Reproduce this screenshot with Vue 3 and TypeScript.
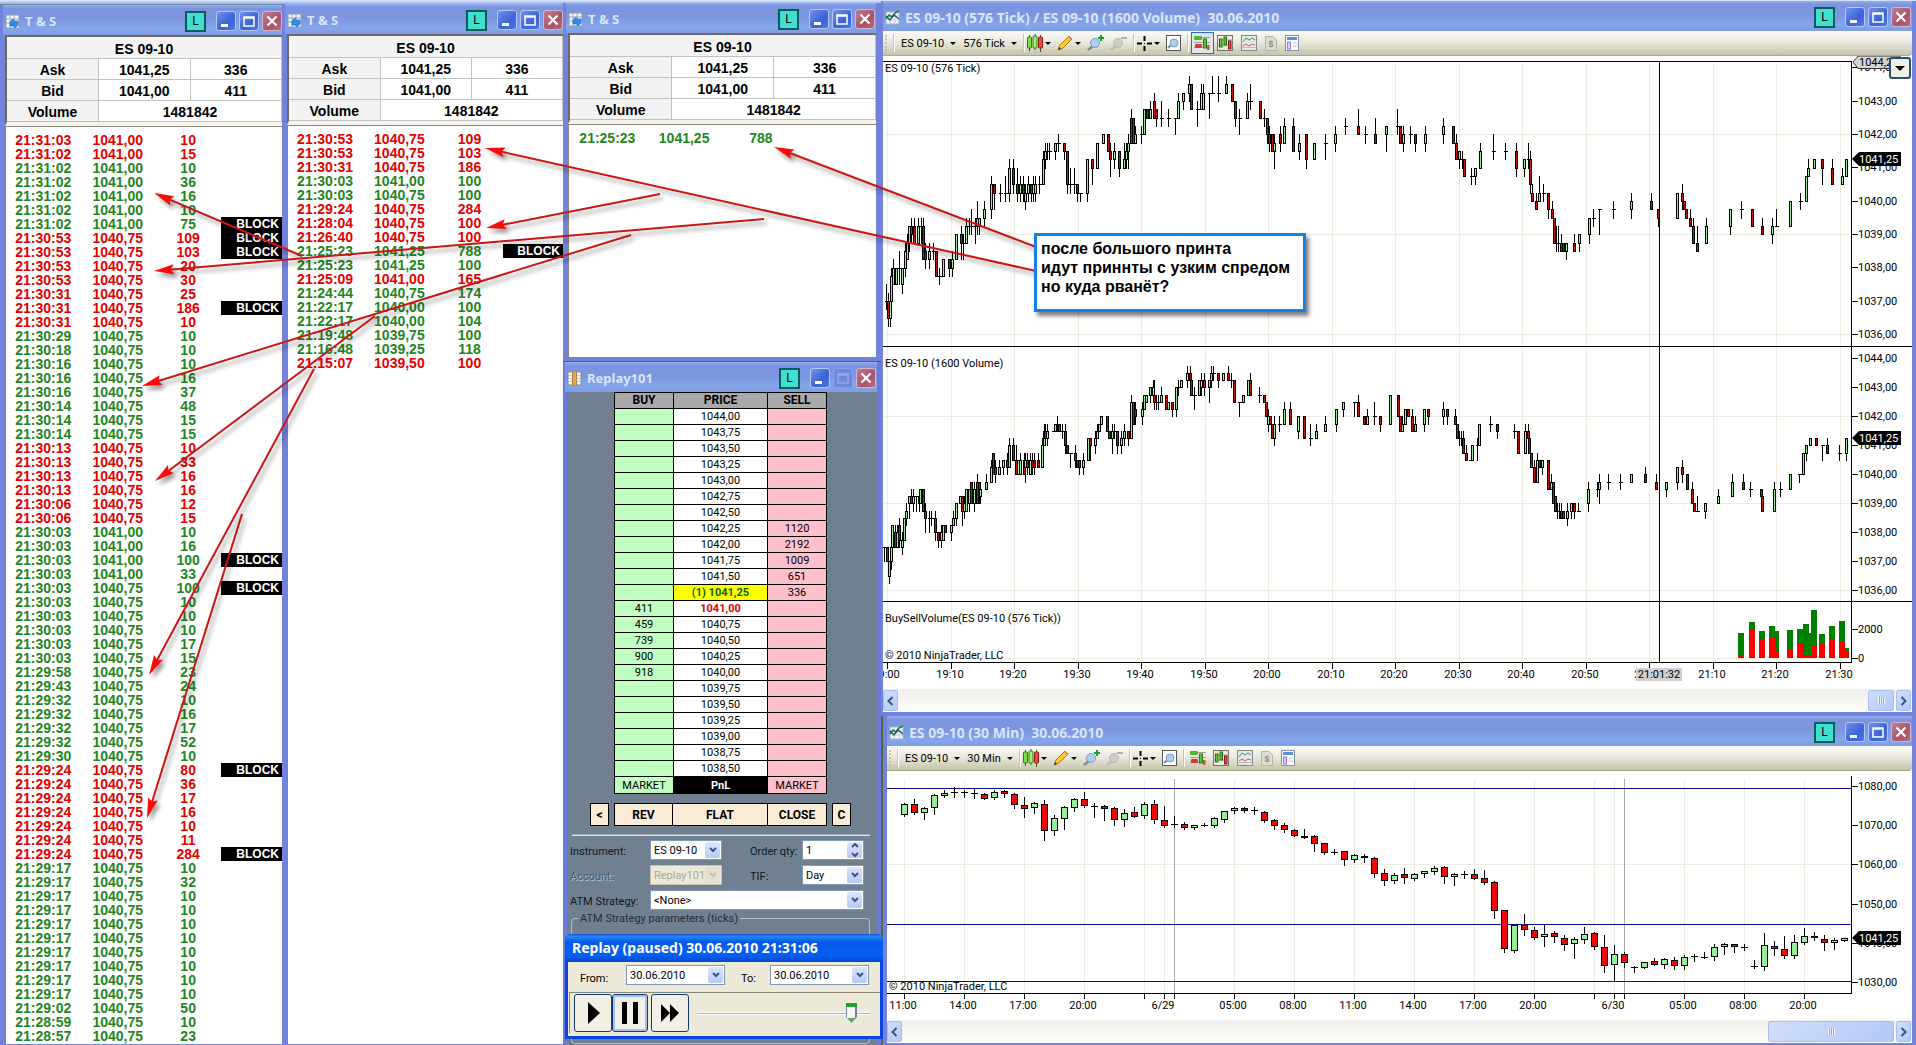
<script setup lang="ts">
import { h, ref } from 'vue'

/* ---------- shared title bar ---------- */

const appIcons: Record<string, string> = {
  tape: '<rect x="1" y="1" width="13" height="13" fill="#f4f6fa" stroke="#8c9ab4"/><path d="M1 5H14M1 9H14M5 1V14M9 1V14" stroke="#9aa6bc"/><path d="M5 8l3-3 1 2h4v4l-3 3-1-2H5z" fill="#2f8fe6" stroke="#1b5fb0" stroke-width=".6"/>',
  dom: '<rect x="1" y="1" width="13" height="13" fill="#f8f4ee" stroke="#8a8a8a"/><rect x="5" y="1" width="5" height="13" fill="#f2a32c"/><path d="M1 4.500H14M1 7.500H14M1 10.500H14" stroke="#c8b8a0" stroke-width=".8"/><path d="M5.500 1V14M9.500 1V14" stroke="#8a7a60" stroke-width=".8"/>',
  chart: '<rect x="1" y="2" width="13" height="12" fill="#f2f5fb" stroke="#a8b4cc"/><path d="M1 6H14M1 10H14M5 2V14M10 2V14" stroke="#c6cede"/><path d="M1 9l3-4 3 2 3-4 4-2" fill="none" stroke="#138a2e" stroke-width="1.600"/><path d="M1 6l4 4 4-5 5 4" fill="none" stroke="#27506e" stroke-width="1.300"/>',
}

const TitleBar = (p: { title: string; icon: string; locked?: boolean }) =>
  h('header', { class: 'bar' }, [
    h('svg', { class: 'bar-icon', width: 15, height: 15, viewBox: '0 0 15 15', innerHTML: appIcons[p.icon] }),
    h('span', { class: 'bar-title' }, p.title),
    h('button', { class: 'bar-link', type: 'button' }, 'L'),
    h('button', { class: 'bar-btn', type: 'button', 'aria-label': 'Minimize' }, [
      h('svg', { width: 18, height: 18, viewBox: '0 0 18 18', innerHTML: '<rect x="4" y="12" width="7" height="3" fill="#fff"/>' }),
    ]),
    h('button', { class: ['bar-btn', p.locked && 'bar-off'], type: 'button', 'aria-label': 'Maximize' }, [
      h('svg', { width: 18, height: 18, viewBox: '0 0 18 18', innerHTML: '<path d="M4 5H14V14H4zM4 6H14" fill="none" stroke="currentColor" stroke-width="1.500"/>' }),
    ]),
    h('button', { class: 'bar-btn bar-close', type: 'button', 'aria-label': 'Close' }, [
      h('svg', { width: 18, height: 18, viewBox: '0 0 18 18', innerHTML: '<path d="M4.500 4.500L13.500 13.500M13.500 4.500L4.500 13.500" stroke="#fff" stroke-width="2.200"/>' }),
    ]),
  ])
TitleBar.props = ['title', 'icon', 'locked']

/* ---------- time & sales ---------- */

interface Print { time: string; price: string; size: string; side: string; block: boolean }

// One line per time and price: "time price size…", each size tagged r sell, g buy, b block trade
const tape = (src: string): Print[] =>
  src.trim().split(/\s*\n\s*/).flatMap((line) => {
    const [time, price, ...sizes] = line.split(' ')
    return sizes.map((s) => ({
      time,
      price,
      size: s.replace(/\D/g, ''),
      side: s.includes('r') ? 'sell' : 'buy',
      block: s.includes('b'),
    }))
  })

const tapes = [
  {
    cls: 'ts-one',
    prints: tape(`21:31:03 1041,00 10r
      21:31:02 1041,00 15r 10g 36g 16g 10g 75gb
      21:30:53 1040,75 109rb 103rb 20r 30r
      21:30:31 1040,75 25r 186rb 10r
      21:30:29 1040,75 10g
      21:30:18 1040,75 10g
      21:30:16 1040,75 10g 16g 37g
      21:30:14 1040,75 48g 15g 15g
      21:30:13 1040,75 10r 33r 16r 16r
      21:30:06 1040,75 12r 15r
      21:30:03 1041,00 10g 16g 100gb 33g
      21:30:03 1040,75 100gb 10g 10g 10g 17g 15g
      21:29:58 1040,75 23g
      21:29:43 1040,75 24g
      21:29:32 1040,75 10g 16g 17g 52g
      21:29:30 1040,75 10g
      21:29:24 1040,75 80rb 36r 17r 16r 10r 11r 284rb
      21:29:17 1040,75 10g 32g 10g 10g 10g 10g 10g 10g 10g 10g
      21:29:02 1040,75 50g
      21:28:59 1040,75 10g
      21:28:57 1040,75 23g`),
  },
  {
    cls: 'ts-two',
    prints: tape(`21:30:53 1040,75 109r 103r
      21:30:31 1040,75 186r
      21:30:03 1041,00 100g
      21:30:03 1040,75 100g
      21:29:24 1040,75 284r
      21:28:04 1040,75 100r
      21:26:40 1040,75 100r
      21:25:23 1041,25 788gb 100g
      21:25:09 1041,00 165r
      21:24:44 1040,75 174g
      21:22:17 1040,00 100g 104g
      21:19:48 1039,75 100g
      21:16:48 1039,25 118g
      21:15:07 1039,50 100r`),
  },
  { cls: 'ts-three', prints: tape('21:25:23 1041,25 788g') },
]

/* ---------- price ladder ---------- */

const bids: Record<string, string> = { '1041,00': '411', '1040,75': '459', '1040,50': '739', '1040,25': '900', '1040,00': '918' }
const asks: Record<string, string> = { '1042,25': '1120', '1042,00': '2192', '1041,75': '1009', '1041,50': '651', '1041,25': '336' }
const ladder = Array.from({ length: 23 }, (_, i) => {
  const price = (1044 - i * 0.25).toFixed(2).replace('.', ',')
  return { price, bid: bids[price] ?? '', ask: asks[price] ?? '' }
})

const qty = ref(1)
const speed = ref(92)

/* ---------- charts ---------- */

interface Candle { x: number; fill: string; top: number; bottom: number; high: number; low: number }

const fills: Record<string, string> = { g: '#98ee98', r: '#c41010', k: '' }

// "x colour top bottom [high] [low]"; levels are quarter-point ticks above 1036,00
const candles = (src: string, x0: number, xStep: number, base: number, tick: number): Candle[] =>
  src.trim().split(/\s*,\s*/).map((s) => {
    const [x, c, a, b, hi, lo] = s.split(' ')
    const y = (t: string) => Math.round(base - Number(t) * tick)
    return {
      x: Math.floor(x0 + Number(x) * xStep),
      fill: fills[c],
      top: y(a),
      bottom: y(b),
      high: y(hi ?? a),
      low: y(lo ?? b),
    }
  })

const tickEarly = `19 k 4 4 6 3,25 r 4 2 5 1,31 g 4 2 6 1,35 g 7 4 8 4,40 g 8 6 9 6,49 g 8 6 8 6,58 k 8 8 10 6,67 g 8 6 8 5,76 g 10 8 11 7,
82 g 11 9 12 9,89 g 13 11 13 10,95 r 13 12 14 11,102 r 13 11 14 11,115 g 13 11 14 11,125 g 13 13 14 11,130 r 13 9 14 9,137 r 10 9 11 8,148 g 10 9 11 8,
159 k 10 10 11 9,169 r 10 7,179 k 7 7 8 6,190 g 9 7,209 r 9 8 9 7,217 g 9 8 10 7,230 g 12 9,245 r 12 11 13 9,251 k 11 11 12 9,260 g 13 11 14 11,
268 k 13 13 14 12,275 k 13 13 15 12,287 k 13 13 14 11,293 g 14 13 16 12,298 g 14 13 14 12,313 g 15 14 16 13,334 g 18 15 19 14,344 r 18 17 18 15,
361 k 17 17 18 16,376 k 17 17 19 16,388 g 20 17 21 16,400 r 20 18 21 17,412 r 18 17 20 16,421 g 18 17 19 16,431 r 18 17 19 16,436 g 17 16 18 15,
446 g 18 17 19 16,453 r 18 17 18 16,460 g 18 17 19 16,467 g 18 17 19 16,478 k 18 18 19 17,490 g 21 18 22 18,496 g 22 21 23 20,503 k 22 22 23 21,
508 k 22 22 23 21,526 g 23 22 23 21,535 k 23 23 24 22,553 r 23 22 23 21,562 r 22 18 22 17,572 k 18 18 20 17,584 k 18 18 20 17,593 r 18 17 18 16,
601 k 17 17 17 16,622 g 21 17 21 16,637 r 21 20 21 18,652 g 23 20,670 g 24 23,685 r 24 22,691 r 22 21 23 19,704 g 22 21 23 20,718 r 22 20 22 19,
733 g 21 20 23 20,740 g 22 21 23 20,746 g 23 22 24 20,755 r 26 23 27 23,761 r 26 23,767 g 24 23 25 23,784 k 24 24 25 23,794 g 27 24,802 r 27 26,
811 g 27 26 28 26,822 r 28 26 29 26,829 r 27 26 27 25,844 k 26 26 28 25,865 k 26 26 27 25,885 k 26 26 26 24,895 g 28 26 29 26,910 g 29 28 29 27,
928 g 30 29 31 28,934 r 30 27,952 k 27 27 28 25,965 g 29 27 30 27,970 g 29 27 30 27,988 k 29 29 29 26,997 k 29 29 31 29,1015 k 29 29 31 28,
1039 g 30 29 31 29,1057 r 30 28,1066 r 28 26 28 25,1078 k 26 26 27 24,1102 g 28 26 29 26,1111 k 28 28 30 27,1141 r 28 26,1153 k 26 26 27 25,
1162 r 26 24 26 23,1169 r 24 23 25 22,1178 r 24 22,1184 g 23 22 24 20,1201 r 24 23 25 22,1213 g 25 23 26 23,1240 r 25 22 26 22,1258 g 23 22 24 21,
1279 r 24 21 24 20,1303 g 23 21,1336 k 23 23 24 21,1366 g 24 23 25 22,1396 k 25 25 26 24,1435 r 25 24 27 24,1456 k 24 24 25 23,1486 r 24 23 26 23,
1519 g 25 24 25 22`
const tickLate = `1397 k 25 25 27 24,1400 r 25 23,1403 g 24 23 25 22,1410 k 24 24 25 23,1415 r 24 23 24 22,1425 g 24 23 25 22,1443 g 25 24 26 23,
1453 r 25 23,1456 r 23 21 24 21,1459 g 22 21 22 20,1462 k 21 21 22 20,1464 r 21 19,1471 k 19 19 20 18,1475 g 20 19 20 18,1480 g 22 20 23 20,
1493 k 22 22 24 21,1505 k 22 22 23 21,1516 r 22 20 23 19,1524 g 21 20 21 19,1528 k 21 21 23 20,1530 r 21 18 22 17,1532 r 17 16 18 16,
1536 r 16 15 17 15,1539 g 17 16 19 16,1543 k 17 17 18 16,1548 r 17 15 17 14,1552 r 15 14 16 14,1554 r 14 11,1556 k 11 11 13 10,1558 k 11 11 13 10,
1561 r 11 10 12 10,1563 r 11 10,1566 g 11 10 11 9,1574 r 11 10 12 10,1579 g 12 11 12 10,1589 g 14 12 14 11,1593 k 14 14 15 13,1599 k 15 15 15 12,
1613 k 15 15 16 14,1631 g 16 15 17 14,1651 r 16 15 17 15,1658 r 15 14 15 13,1677 g 17 14,1682 r 17 16 18 15,1684 r 16 15,1686 r 15 14,
1690 r 14 13 15 13,1693 r 13 11 14 11,1697 r 11 10 13 10,1706 g 13 11 14 11,1730 g 15 13 15 12,1741 k 15 15 16 14,1752 r 15 13,1762 r 13 12 14 12,
1772 g 13 12 14 11,1776 k 13 13 15 13,1790 g 16 13,1800 k 16 16 17 15,1806 g 19 16,1808 g 20 19 21 19,1814 g 21 20,1822 r 21 20 21 18,
1832 r 20 18 21 18,1842 g 19 18 20 18,1846 g 21 19`
const volEarly = `14 k 6 6 6 4,22 r 6 4,27 g 4 2 4 1,33 g 6 4 7 3,38 g 9 6,45 r 8 6 9 6,52 g 8 6 9 6,57 r 9 7 10 6,66 g 7 6 8 5,73 g 10 7,80 g 11 10 12 9,
87 g 13 12 13 10,94 r 13 12 14 12,100 g 13 12 14 11,108 k 13 13 13 11,117 g 13 12 14 11,122 g 14 12,130 r 14 11,135 r 11 10 12 8,148 k 10 10 11 8,
154 k 10 10 11 9,167 r 10 8 11 7,175 r 8 7 8 6,180 r 8 7,185 g 8 7 9 6,191 g 9 7,196 r 9 8,213 g 9 8 9 7,220 g 10 9 11 9,229 g 12 10 12 9,240 g 13 12,
248 r 13 11 13 9,254 g 12 11 13 10,260 g 14 11,267 g 14 12 14 11,274 r 15 12,283 g 14 12 15 11,291 r 15 12 16 12,297 r 15 13 15 12,302 g 14 13 15 12,
320 g 15 14 16 14,334 g 17 15 18 15,340 r 19 16,346 r 17 16 18 15,358 g 17 16 18 16,370 g 18 17 18 16,382 r 18 17 19 16,388 g 20 17 21 17,
400 r 20 18 21 18,410 r 18 16 20 16,415 g 18 16,422 g 18 16 19 16,432 r 18 16 19 16,437 g 18 17 19 15,443 r 18 17 19 16,450 g 18 16 19 16,
457 r 18 17 19 16,463 r 18 17 19 16,475 r 18 17 19 17,487 g 20 17 21 17,492 g 22 20 23 20,497 r 22 21 23 21,503 g 22 21 23 20,520 k 22 22,
525 g 23 22,532 k 23 23 24 22,538 r 23 22,547 k 22 22 23 21,556 r 22 20 23 19,562 r 20 19,571 k 19 19 19 17,586 r 19 18 20 17,591 r 18 17,
597 r 18 17 18 16,611 g 18 17 19 16,625 g 21 18,631 r 21 20 21 18,646 g 21 20 22 19,652 g 22 21 23 21,658 g 23 22,664 g 24 23,682 r 24 22,
687 r 22 21,697 g 22 21 23 19,703 k 22 22 23 21,712 r 22 20 22 19,724 g 21 20 22 19,733 g 22 21 23 20,745 r 22 21 22 20,754 g 26 21 27 21,
760 r 26 23,766 r 25 24 26 23,787 g 25 24 26 23,793 g 27 25,800 g 27 26,811 g 28 27 28 26,820 g 28 27 29 26,824 r 27 26 29 25,829 k 26 26 27 25,
836 k 26 26 27 25,845 g 27 26 28 26,859 r 27 25,865 g 26 25,877 r 26 25 26 24,889 g 28 25 28 24,895 k 28 28 29 27,905 g 29 28,921 g 30 29 31 28,
931 r 30 29 31 27,934 r 29 27,943 k 27 27 28 25,958 g 29 27,964 g 29 28 30 27,974 r 29 28 30 27,988 g 29 28 29 26,995 g 30 29 31 28,
1000 k 30 30 31 29,1015 r 30 29 30 28,1030 g 30 29,1045 r 30 29 31 29,1054 k 29 29 30 28,1063 r 29 26,1078 k 26 26 26 24,1090 g 27 26,1105 g 29 27,
1111 r 29 27 30 27,1138 k 27 27 28 26,1153 r 27 26,1160 r 26 24,1165 g 24 23 25 22,1172 r 24 23,1176 r 23 21,1183 g 23 21 24 20,1197 k 23 23 24 22,
1213 g 25 23 26 23,1231 r 25 23 26 23,1255 g 24 22 24 21,1273 r 24 21,1291 k 21 21 23 20,1309 g 22 21 23 21,1336 g 23 22 24 22,1369 g 25 23 25 22,
1390 g 26 25 26 24,1423 k 26 26 26 24,1435 r 26 24 27 24,1453 r 24 23,1462 g 24 23 25 23,1483 k 24 24 26 23,1501 r 24 23 24 22,1531 g 27 23`
const volLate = `1398 r 27 24,1400 r 24 22,1402 g 23 22 24 22,1405 g 25 23,1408 r 25 24,1412 r 24 22 25 22,1415 g 23 22 24 22,1424 g 25 23 25 22,
1428 r 25 24 25 23,1443 g 25 24 26 23,1447 r 25 24 25 23,1455 r 24 23 25 23,1457 r 23 21,1459 k 21 21 22 20,1461 k 21 21 22 20,1463 r 21 19 22 19,
1466 r 19 18 20 18,1470 k 18 18,1472 g 20 18,1477 k 20 20 21 18,1479 g 23 20,1490 k 23 23 24 22,1497 r 23 22 23 21,1514 k 22 22 23 21,1518 r 22 19,
1525 g 22 19 23 19,1528 r 22 21 23 21,1529 r 21 19,1531 r 19 17,1534 r 17 15 18 15,1537 g 18 15 19 15,1539 r 18 17,1542 g 18 17 18 16,1548 r 18 14,
1551 g 15 14 16 14,1553 r 15 12,1555 r 13 11,1557 k 11 11 12 10,1559 k 11 11 12 10,1561 r 11 10 12 10,1563 r 11 10,1567 g 11 10 12 9,
1571 g 12 11 12 10,1574 r 12 11 12 10,1578 k 11 11 12 11,1588 g 14 12 15 11,1597 k 14 14 15 13,1599 g 15 14 16 12,1608 k 15 15 16 14,
1620 k 15 15 16 14,1631 g 16 15,1645 r 16 15 17 15,1656 r 15 14 16 14,1666 g 15 14 15 13,1677 g 17 15 17 14,1682 r 17 16 18 15,1687 r 16 14,
1692 r 14 12 15 12,1694 r 12 11,1697 k 11 11 13 11,1705 g 12 11 12 10,1718 g 13 12 14 12,1732 g 15 13 16 13,1743 r 15 14 16 14,1750 k 14 14 15 13,
1761 r 14 13,1762 r 13 11,1774 g 14 11 15 11,1780 k 14 14 15 13,1790 g 16 14,1799 k 16 16 16 15,1803 g 19 16,1806 g 20 19 20 18,1810 g 21 20,
1816 r 21 20,1822 k 20 20 20 18,1827 r 20 19 21 19,1839 k 19 19 20 18,1846 g 21 19 21 18`

const intraday = [
  ...candles(tickEarly, 880, 1 / 3, 334.3, 8.333),
  ...candles(tickLate, 0, 1, 334.3, 8.333),
  ...candles(volEarly, 880, 1 / 3, 590.3, 7.25),
  ...candles(volLate, 0, 1, 590.3, 7.25),
]

// Volume histogram: x, width, total height, sell height
const volumes = [
  [1738, 6, 25, 3], [1749, 6, 36, 29], [1759, 6, 27, 18], [1769, 6, 32, 20], [1775, 4, 27, 7], [1787, 6, 28, 9], [1797, 6, 29, 14],
  [1803, 6, 34, 2], [1809, 2, 25, 2], [1811, 6, 48, 13], [1819, 6, 24, 14], [1829, 6, 32, 18], [1839, 6, 37, 17], [1845, 4, 10, 6],
]

// Half-hour bars, ten pixels apart: "colour top bottom high low" in thirds of a pixel below the window top
const halfHour = `g 283 314 279 318,r 283 308 267 311,g 295 308 290 326,g 256 295 252 311,g 250 257 240 260,k 247 250 232 260,k 247 250 240 260,k 249 249 238 264,
r 252 266 249 267,g 247 263 240 267,r 244 251 241 260,r 252 284 248 293,r 284 296 262 320,g 280 295 276 308,r 283 362 270 390,g 325 362 315 375,
g 292 326 288 357,g 268 293 265 302,r 268 287 246 291,k 287 290 280 320,r 289 296 285 329,r 295 329 291 345,g 310 329 297 347,r 307 320 291 321,
g 283 317 276 325,r 283 331 270 338,r 331 347 288 350,k 343 346 318 350,r 343 353 337 356,g 346 353 344 356,k 346 346 339 348,g 325 347 322 350,
g 304 329 303 335,g 295 304 291 308,r 295 302 290 305,k 301 304 291 311,r 307 332 303 335,r 331 347 327 356,r 346 361 340 365,r 361 377 356 378,
r 377 383 357 385,r 379 401 375 422,r 400 428 398 431,k 427 427 417 432,r 424 449 422 464,g 436 449 432 455,r 439 445 433 455,r 445 491 442 502,
r 490 512 478 524,g 496 512 490 518,r 492 503 475 518,g 492 506 488 510,g 484 493 482 500,g 475 485 468 493,r 472 502 468 518,g 492 502 488 524,
k 493 493 484 504,r 492 506 478 508,r 504 518 480 521,r 517 602 514 623,r 601 718 600 727,g 646 722 644 725,r 645 661 612 675,r 660 683 652 686,
g 673 680 645 708,r 670 682 664 695,r 685 706 676 719,g 687 703 682 743,g 673 689 651 700,r 670 712 666 718,r 712 767 676 785,g 733 764 706 814,
r 733 758 726 770,k 772 775 768 785,g 757 775 757 775,r 754 764 744 765,g 748 764 744 773,r 751 767 741 776,g 742 767 736 776,k 739 739 733 752,
k 740 743 726 743,g 710 740 703 749,g 703 710 700 731,r 703 710 702 725,k 712 712 703 719,k 767 770 751 773,g 706 770 670 779,r 709 716 694 735,
r 718 737 679 743,g 697 737 676 743,g 679 700 654 702,r 679 685 667 689,r 688 700 676 719,g 691 700 685 716,g 685 694 685 694`
  .split(/\s*,\s*/)
  .map((s, i) => {
    const [c, ...v] = s.split(' ')
    const [top, bottom, high, low] = v.map((n) => 710 + Math.round(Number(n) / 3))
    return { x: 904 + i * 10, fill: c === 'g' ? '#98ee98' : c === 'r' ? '#f00808' : '', top, bottom, high, low }
  })

const priceLabels = [
  ...[1044, 1043, 1042, 1041, 1040, 1039, 1038, 1037, 1036].map((p) => ({ text: p + ',00', y: Math.round(334 - (p - 1036) * 33.33) })),
  ...[1044, 1043, 1042, 1041, 1040, 1039, 1038, 1037, 1036].map((p) => ({ text: p + ',00', y: 590 - (p - 1036) * 29 })),
  { text: '2000', y: 629 },
  { text: '0', y: 658 },
]
const dayLabels = [1080, 1070, 1060, 1050, 1040, 1030].map((p) => ({ text: p + ',00', y: Math.round(982 - (p - 1030) * 3.92) }))

const times = ['19:00', '19:10', '19:20', '19:30', '19:40', '19:50', '20:00', '20:10', '20:20', '20:30', '20:40', '20:50', '21:00', '21:10', '21:20', '21:30']
  .map((text, i) => ({ text, x: Math.round(887 + i * 63.5) }))
const dayTimes = [
  ['11:00', 904], ['14:00', 964], ['17:00', 1024], ['20:00', 1084], ['', 1144], ['6/29', 1164], ['05:00', 1234], ['08:00', 1294], ['11:00', 1354],
  ['14:00', 1414], ['17:00', 1474], ['20:00', 1534], ['', 1594], ['6/30', 1614], ['05:00', 1684], ['08:00', 1744], ['20:00', 1804],
].map(([text, x]) => ({ text: String(text), x: Number(x) }))

const charts = [
  { id: 'intraday', title: 'ES 09-10 (576 Tick) / ES 09-10 (1600 Volume)\u00a0 30.06.2010', interval: '576 Tick', tabs: true },
  { id: 'day', title: 'ES 09-10 (30 Min)\u00a0 30.06.2010', interval: '30 Min', tabs: false },
]

/* ---------- annotation arrows: tip x, tip y, tail x, tail y ---------- */

const arrows = [
  [154, 193, 302, 256], [154, 271, 764, 219], [142, 386, 631, 235], [155, 481, 375, 316], [149, 675, 314, 369],
  [147, 818, 242, 514], [485, 148, 1036, 271], [486, 228, 660, 194], [774, 147, 1036, 247],
].map(([x, y, tx, ty]) => {
  const len = Math.hypot(tx - x, ty - y)
  const ux = (tx - x) / len
  const uy = (ty - y) / len
  const at = (along: number, side: number) => `${(x + ux * along - uy * side).toFixed(1)},${(y + uy * along + ux * side).toFixed(1)}`
  return { line: { x1: x + ux * 12, y1: y + uy * 12, x2: tx, y2: ty }, head: [at(0, 0), at(20, 5), at(17, 0), at(20, -5)].join(' ') }
})
</script>

<template>
  <main class="desktop">
    <section v-for="t in tapes" :key="t.cls" class="win ts" :class="t.cls">
      <TitleBar title="T &amp; S" icon="tape" />
      <div class="sunken">
        <table class="quote">
          <thead>
            <tr><th colspan="3">ES 09-10</th></tr>
          </thead>
          <tbody>
            <tr><th scope="row">Ask</th><td>1041,25</td><td>336</td></tr>
            <tr><th scope="row">Bid</th><td>1041,00</td><td>411</td></tr>
            <tr><th scope="row">Volume</th><td colspan="2">1481842</td></tr>
          </tbody>
        </table>
      </div>
      <div class="tape">
        <table class="prints">
          <tbody>
            <tr v-for="(p, i) in t.prints" :key="i" :class="p.side">
              <td>{{ p.time }}</td>
              <td>{{ p.price }}</td>
              <td>{{ p.size }}</td>
              <td :class="{ block: p.block }">{{ p.block ? 'BLOCK' : '' }}</td>
            </tr>
          </tbody>
        </table>
      </div>
    </section>

    <section class="win dom">
      <TitleBar title="Replay101" icon="dom" :locked="true" />
      <div class="dom-body">
        <table class="ladder">
          <thead>
            <tr><th>BUY</th><th>PRICE</th><th>SELL</th></tr>
          </thead>
          <tbody>
            <tr v-for="r in ladder" :key="r.price">
              <td class="bid">{{ r.bid }}</td>
              <td :class="{ last: r.price === '1041,25', best: r.price === '1041,00' }">{{ r.price === '1041,25' ? '(1) ' : '' }}{{ r.price }}</td>
              <td class="ask">{{ r.ask }}</td>
            </tr>
          </tbody>
          <tfoot>
            <tr><td class="bid">MARKET</td><td class="pnl">PnL</td><td class="ask">MARKET</td></tr>
          </tfoot>
        </table>
        <div class="actions">
          <button type="button" class="small">&lt;</button>
          <div class="trio">
            <button type="button">REV</button>
            <button type="button">FLAT</button>
            <button type="button">CLOSE</button>
          </div>
          <button type="button" class="small">C</button>
        </div>
        <hr class="rule" />
        <form class="order" @submit.prevent>
          <label for="instrument">Instrument:</label>
          <span class="combo"><select id="instrument"><option>ES 09-10</option></select><i class="drop"><svg width="8" height="6" viewBox="0 0 8 6"><path d="M1 1l3 3 3-3" /></svg></i></span>
          <label for="qty" class="second">Order qty:</label>
          <span class="combo spin"><input id="qty" v-model="qty" type="number" /><i class="drop"><svg width="8" height="14" viewBox="0 0 8 14"><path d="M1 4l3-3 3 3M1 10l3 3 3-3" /></svg></i></span>
          <label for="account" class="faded">Account:</label>
          <span class="combo off"><select id="account" disabled><option>Replay101</option></select><i class="drop"><svg width="8" height="6" viewBox="0 0 8 6"><path d="M1 1l3 3 3-3" /></svg></i></span>
          <label for="tif" class="second">TIF:</label>
          <span class="combo"><select id="tif"><option>Day</option></select><i class="drop"><svg width="8" height="6" viewBox="0 0 8 6"><path d="M1 1l3 3 3-3" /></svg></i></span>
          <label for="atm">ATM Strategy:</label>
          <span class="combo full"><select id="atm"><option>&lt;None&gt;</option></select><i class="drop"><svg width="8" height="6" viewBox="0 0 8 6"><path d="M1 1l3 3 3-3" /></svg></i></span>
        </form>
        <fieldset class="params">
          <legend>ATM Strategy parameters (ticks)</legend>
        </fieldset>
      </div>
    </section>

    <section v-for="c in charts" :key="c.id" class="win chart" :class="c.id">
      <TitleBar :title="c.title" icon="chart" />
      <div class="tools">
        <span class="grip"></span><span class="sep"></span>
        <button type="button" class="pick">ES 09-10<i class="caret"></i></button>
        <button type="button" class="pick">{{ c.interval }}<i class="caret"></i></button>
        <span class="sep"></span>
        <button type="button" class="tool" aria-label="Chart style">
          <svg width="16" height="18" viewBox="0 0 16 18"><path d="M2.500 1V17M8 0V16M13.500 1V18" stroke="#3c5c2c" /><rect x="0.500" y="3" width="4" height="11" rx="1" fill="#7fe03c" stroke="#2c7c1c" /><rect x="6" y="2" width="4" height="12" rx="1" fill="#a8ee70" stroke="#2c7c1c" /><rect x="11.500" y="3" width="4" height="11" rx="1" fill="#e05048" stroke="#981818" /></svg>
        </button><i class="caret"></i>
        <button type="button" class="tool gap" aria-label="Draw">
          <svg width="16" height="16" viewBox="0 0 16 16"><path d="M1 15l2-5 9-9 3 3-9 9z" fill="#f8cc30" stroke="#b07810" /><path d="M1 15l1-3 2 2z" fill="#333" /><path d="M11 2l3 3 1-1-3-3z" fill="#d88080" /></svg>
        </button><i class="caret"></i>
        <button type="button" class="tool gap" aria-label="Zoom in">
          <svg width="17" height="16" viewBox="0 0 17 16"><path d="M1 15l5-4" stroke="#7c8894" stroke-width="2.500" /><circle cx="8" cy="8" r="4.500" fill="#a8d0f4" stroke="#7e9cc0" /><path d="M14 0V6M11 3H17" stroke="#14a028" stroke-width="2" /></svg>
        </button>
        <button type="button" class="tool gap" aria-label="Zoom out" disabled>
          <svg width="17" height="16" viewBox="0 0 17 16"><path d="M1 15l5-4" stroke="#bcbcb8" stroke-width="2.500" /><circle cx="8" cy="8" r="4.500" fill="#ccccc8" stroke="#b8b8b4" /><path d="M11 3H17" stroke="#b0b0ac" stroke-width="2" /></svg>
        </button>
        <span class="sep"></span>
        <button type="button" class="tool" aria-label="Crosshair">
          <svg width="15" height="15" viewBox="0 0 15 15"><path d="M7.500 0V5M7.500 10V15M0 7.500H5M10 7.500H15" stroke="#000" stroke-width="2" /><rect x="7" y="7" width="1" height="1" /></svg>
        </button><i class="caret"></i>
        <button type="button" class="tool gap" aria-label="Data box">
          <svg width="15" height="16" viewBox="0 0 15 16"><rect x="0.500" y="0.500" width="14" height="15" fill="#fff" stroke="#555" /><path d="M2 13l3-3" stroke="#7c8894" stroke-width="2" /><circle cx="8" cy="8" r="4" fill="#a8d0f4" stroke="#7e9cc0" /></svg>
        </button>
        <span class="sep"></span>
        <button type="button" class="tool toggle" :class="{ on: c.tabs }" aria-label="Chart trader">
          <svg width="16" height="16" viewBox="0 0 16 16"><path d="M0 7.500H16M0 2.500H16M0 12.500H16" stroke="#98a0a0" /><rect x="0" y="1" width="8" height="4" rx="1" fill="#50b828" /><rect x="1" y="9" width="7" height="4" rx="1" fill="#d83830" /><rect x="9.500" y="4" width="3" height="9" fill="#58c030" stroke="#2c7c1c" /><rect x="13" y="10" width="2.500" height="5" fill="#e05048" /></svg>
        </button>
        <button type="button" class="tool" aria-label="Indicators">
          <svg width="16" height="16" viewBox="0 0 16 16"><rect x="0.500" y="0.500" width="15" height="15" fill="#e8ece4" stroke="#707070" /><path d="M0 5H16M0 10H16" stroke="#a0a0a0" /><rect x="2.500" y="4" width="2.500" height="8" fill="#68c838" stroke="#246c14" /><rect x="7" y="2" width="2.500" height="8" fill="#68c838" stroke="#246c14" /><rect x="11.500" y="6" width="2.500" height="8" fill="#e05048" stroke="#901818" /></svg>
        </button>
        <button type="button" class="tool far" aria-label="Strategies">
          <svg width="16" height="16" viewBox="0 0 16 16"><rect x="0.500" y="0.500" width="15" height="15" fill="#e4e8e8" stroke="#888" /><path d="M1 12.500H15" stroke="#b8bcbc" /><path d="M2 7l3-4 3 2 3-2 3 2" fill="none" stroke="#38a058" /><path d="M2 11l3-2 3 2 3-2 3 1" fill="none" stroke="#d85850" /></svg>
        </button>
        <button type="button" class="tool far" aria-label="Orders" disabled>
          <svg width="12" height="15" viewBox="0 0 12 15"><path d="M0.500 0.500H8l3.500 3.500V14.500H0.500z" fill="#dcdcd4" stroke="#b4b4ac" /><text x="6" y="11" text-anchor="middle" font-size="9" font-weight="700" fill="#8c8c88">$</text></svg>
        </button>
        <button type="button" class="tool far" aria-label="Properties">
          <svg width="14" height="16" viewBox="0 0 14 16"><rect x="0.500" y="0.500" width="13" height="15" fill="#fff" stroke="#8090a8" /><rect x="2" y="2" width="10" height="3" fill="#5890e0" /><rect x="2.500" y="7" width="3" height="7" fill="#d8c8f8" stroke="#9878e0" /><path d="M8 8H12M8 11H12" stroke="#b8c4d4" /></svg>
        </button>
      </div>

      <div class="plot">
        <svg v-if="c.tabs" class="canvas" viewBox="883 56 1029 633">
          <g class="grid">
            <path v-for="t in times" :key="t.x" :d="`M${t.x}.5 64V662`" />
            <path d="M884 134.500H1851M884 234.500H1851M884 334.500H1851M884 416.500H1851M884 503.500H1851M884 590.500H1851M884 658.500H1851" />
          </g>
          <g shape-rendering="crispEdges">
            <template v-for="(k, i) in intraday" :key="i">
              <rect :x="k.x" :y="k.high" width="1" :height="k.low - k.high + 1" />
              <rect :x="k.x - 1" :y="k.top" :width="k.fill ? 3 : 4" :height="k.bottom - k.top + 1" />
              <rect v-if="k.fill && k.bottom > k.top + 1" :x="k.x" :y="k.top + 1" width="1" :height="k.bottom - k.top - 1" :fill="k.fill" />
            </template>
            <template v-for="v in volumes" :key="v[0]">
              <rect :x="v[0]" :y="658 - v[2]" :width="v[1]" :height="v[2]" fill="#008000" />
              <rect :x="v[0]" :y="658 - v[3]" :width="v[1]" :height="v[3]" fill="#ff0000" />
            </template>
          </g>
          <g class="axis">
            <path d="M883 61.500H1851.500V662.500M883 346.500H1912M883 601.500H1912M883 662.500H1852M1659.500 61V662" />
            <path v-for="t in times" :key="t.x" :d="`M${t.x}.5 662V669`" />
            <path v-for="(l, i) in priceLabels" :key="i" :d="`M1852 ${l.y}.5H1858`" />
          </g>
          <g class="labels">
            <text v-for="t in times" :key="t.x" :x="t.x - 1" y="678" text-anchor="middle">{{ t.text }}</text>
            <text v-for="(l, i) in priceLabels" :key="i" x="1858" :y="l.y + 4">{{ l.text }}</text>
            <text x="885" y="72">ES 09-10 (576 Tick)</text>
            <text x="885" y="367">ES 09-10 (1600 Volume)</text>
            <text x="885" y="622">BuySellVolume(ES 09-10 (576 Tick))</text>
            <text x="885" y="659">© 2010 NinjaTrader, LLC</text>
            <rect x="1636" y="668" width="46" height="13" fill="#d0d0d0" />
            <text x="1659" y="678" text-anchor="middle">21:01:32</text>
            <path d="M1853 62l5-6H1900V68.500H1858z" fill="#d4d4d4" stroke="#333" />
            <text x="1859" y="66">1044,25</text>
            <path d="M1852 159l7-7H1901V166H1859z" />
            <text x="1859" y="163" fill="#fff">1041,25</text>
            <path d="M1852 438l7-7H1901V445H1859z" />
            <text x="1859" y="442" fill="#fff">1041,25</text>
          </g>
        </svg>
        <svg v-else class="canvas" viewBox="887 771 1025 249">
          <g class="grid">
            <path v-for="t in dayTimes" :key="t.x" :d="`M${t.x}.5 779V993`" />
            <path d="M888 864.500H1851" />
            <path d="M1174.500 779V993M1624.500 779V993" stroke="#a8a8a8" />
          </g>
          <path d="M887 788.500H1851M887 924.500H1851M887 981.500H1851" stroke="#0a0a8c" />
          <g shape-rendering="crispEdges">
            <template v-for="k in halfHour" :key="k.x">
              <rect :x="k.x" :y="k.high" width="1" :height="k.low - k.high + 1" />
              <rect :x="k.x - 3" :y="k.top" width="7" :height="Math.max(k.bottom - k.top, 1)" />
              <rect v-if="k.fill && k.bottom > k.top + 2" :x="k.x - 2" :y="k.top + 1" width="5" :height="k.bottom - k.top - 2" :fill="k.fill" />
            </template>
          </g>
          <g class="axis">
            <path d="M1851.500 776V993.500H887M1174.500 993V999M1624.500 993V999" />
            <path v-for="t in dayTimes" :key="t.x" :d="`M${t.x}.5 993V999`" />
            <path v-for="l in dayLabels" :key="l.y" :d="`M1852 ${l.y}.5H1858`" />
          </g>
          <g class="labels">
            <text v-for="t in dayTimes" :key="t.x" :x="t.x - 1" y="1009" text-anchor="middle">{{ t.text }}</text>
            <text v-for="l in dayLabels" :key="l.y" x="1858" :y="l.y + 4">{{ l.text }}</text>
            <text x="889" y="990">© 2010 NinjaTrader, LLC</text>
            <path d="M1852 938l7-7H1901V945H1859z" />
            <text x="1859" y="942" fill="#fff">1041,25</text>
          </g>
        </svg>
        <button v-if="c.tabs" type="button" class="menu" aria-label="Scale menu"><i class="caret"></i></button>
      </div>
      <div class="scroll">
        <button type="button" class="step" aria-label="Scroll left"><svg width="7" height="10" viewBox="0 0 7 10"><path d="M5.500 1L1.500 5L5.500 9" /></svg></button>
        <span class="thumb"></span>
        <button type="button" class="step" aria-label="Scroll right"><svg width="7" height="10" viewBox="0 0 7 10"><path d="M1.500 1L5.500 5L1.500 9" /></svg></button>
      </div>
    </section>

    <section class="player">
      <header>Replay (paused) 30.06.2010 21:31:06</header>
      <div class="range">
        <label for="from">From:</label>
        <span class="combo"><select id="from"><option>30.06.2010</option></select><i class="drop"><svg width="8" height="6" viewBox="0 0 8 6"><path d="M1 1l3 3 3-3" /></svg></i></span>
        <label for="to">To:</label>
        <span class="combo"><select id="to"><option>30.06.2010</option></select><i class="drop"><svg width="8" height="6" viewBox="0 0 8 6"><path d="M1 1l3 3 3-3" /></svg></i></span>
      </div>
      <div class="deck">
        <button type="button" aria-label="Play"><svg width="24" height="24" viewBox="0 0 24 24"><path d="M7 1L19 12L7 23z" /></svg></button>
        <button type="button" class="held" aria-label="Pause"><svg width="24" height="24" viewBox="0 0 24 24"><path d="M4 1h5v22h-5zM15 1h5v22h-5z" /></svg></button>
        <button type="button" aria-label="Fast forward"><svg width="24" height="24" viewBox="0 0 24 24"><path d="M3 3L12 12L3 21zM12 3L21 12L12 21z" /></svg></button>
        <input v-model="speed" type="range" min="0" max="100" aria-label="Replay speed" />
      </div>
    </section>

    <svg class="arrows">
      <g v-for="(a, i) in arrows" :key="i">
        <line v-bind="a.line" stroke="#cc1616" stroke-width="2" />
        <polygon :points="a.head" fill="#fa0a0a" />
      </g>
    </svg>
    <p class="note">после большого принта<br />идут приннты с узким спредом<br />но куда рванёт?</p>
  </main>
</template>

<style>
body {
  background: #b9cdf0;
}
.bar {
  display: flex;
  align-items: center;
  box-sizing: border-box;
  height: 30px;
  padding: 2px 1px 0 2px;
  background: linear-gradient(#93aef0 0, #7b94df 12%, #7b96e0 45%, #84a6ea 80%, #7f9be4 100%);
}
.bar-icon {
  flex: none;
}
.bar-title {
  flex: 1;
  padding-left: 5px;
  overflow: hidden;
  font: bold 13px "Noto Sans", sans-serif;
  white-space: nowrap;
  color: #d9e5fb;
}
.bar-link {
  flex: none;
  box-sizing: border-box;
  width: 21px;
  height: 21px;
  margin-right: 7px;
  padding: 0;
  border: 2px solid #0c5a5c;
  background: #40e0d0;
  font: 12px Roboto, sans-serif;
  color: #000;
}
.bar-btn {
  flex: none;
  display: grid;
  place-items: center;
  box-sizing: border-box;
  width: 20px;
  height: 20px;
  margin-left: 3px;
  padding: 0;
  border: 1px solid #b4c6f4;
  border-radius: 3px;
  background: linear-gradient(135deg, #6f92ee, #3c62d8 60%, #4a78e8);
  color: #fff;
}
.bar-off {
  background: #6e88de;
  border-color: #8aa2e8;
  color: #8fa8ea;
}
.bar-close {
  background: linear-gradient(135deg, #c07c94, #a85468 60%, #b8687c);
  border-color: #d0b4d0;
}
</style>

<style scoped>
.desktop {
  position: relative;
  display: grid;
  grid-template-columns: 282px 281px 318px minmax(0, 1fr);
  grid-template-rows: 361px 355px minmax(0, 1fr);
  height: 100vh;
  overflow: hidden;
  background: linear-gradient(#dfeafc 0, #8fb0ec 4px, #4a5f3c 5px, #566b46 100%);
  font: 11px Roboto, sans-serif;
  color: #000;
}
.win {
  display: flex;
  flex-direction: column;
  min-width: 0;
  box-sizing: border-box;
  border: 0 solid #7382db;
}
.win :deep(.bar) {
  flex: none;
  margin-left: -2px;
}
button {
  cursor: pointer;
}

/* time & sales */
.ts {
  border-left-width: 5px;
  background: #fff;
}
.ts-one {
  grid-area: 1 / 1 / 4 / 2;
  margin-top: 5px;
  border-bottom-width: 1px;
}
.ts-two {
  grid-area: 1 / 2 / 4 / 3;
  margin-top: 4px;
  border-bottom-width: 1px;
}
.ts-one :deep(.bar),
.ts-two :deep(.bar) {
  padding-right: 0;
}
.ts-three {
  grid-area: 1 / 3 / 2 / 4;
  margin-top: 3px;
  border-right-width: 5px;
  border-bottom-width: 4px;
}
.sunken {
  border-top: 2px solid #6e6a62;
  border-left: 2px solid #6e6a62;
  border-bottom: 4px solid #f6f4ec;
}
.quote {
  width: 100%;
  border-collapse: collapse;
  table-layout: fixed;
  font: bold 14px "Liberation Sans", sans-serif;
  text-align: center;
}
.quote th,
.quote td {
  box-sizing: border-box;
  height: 21px;
  padding: 2px 0 0;
  border: 1px solid #c2c2c2;
  border-width: 0 1px 1px 0;
  line-height: 16px;
}
.quote thead th {
  padding-top: 4px;
}
.quote th {
  background: #f3f3f3;
}
.tape {
  flex: 1;
  border-top: 1px solid #8a8678;
  border-left: 1px solid #8a8678;
  padding-top: 6px;
}
.prints {
  width: 100%;
  border-collapse: collapse;
  table-layout: fixed;
  font: bold 14px/14px "Liberation Sans", sans-serif;
  text-align: center;
}
.prints td {
  height: 14px;
  padding: 0;
  width: 27%;
}
.prints td:nth-child(3) {
  width: 24%;
}
.prints td:nth-child(4) {
  width: 22%;
}
.ts-three .prints td {
  width: 25%;
}
.buy {
  color: #1f861f;
}
.sell {
  color: #e60000;
}
.prints td.block {
  padding-right: 3px;
  background: #000;
  color: #fff;
  font-size: 12px;
  text-align: right;
}

/* price ladder */
.dom {
  grid-area: 2 / 3 / 4 / 4;
  margin-top: 1px;
  border-width: 0 4px 0 4px;
  border-color: #6a7adc;
}
.dom-body {
  flex: 1;
  display: flex;
  flex-direction: column;
  background: #708090;
}
.ladder {
  width: 213px;
  margin-left: 47px;
  border-collapse: collapse;
  table-layout: fixed;
  text-align: center;
}
.ladder th,
.ladder td {
  box-sizing: border-box;
  height: 16px;
  padding: 0;
  border: 1px solid #000;
  background: #fff;
  line-height: 15px;
}
.ladder th {
  background: #a9a9a9;
  font-size: 12px;
}
.ladder tfoot td {
  height: 17px;
}
.ladder th:nth-child(odd) {
  width: 59px;
}
.ladder .bid {
  background: #c0ffc0;
}
.ladder .ask {
  background: #ffc0cb;
}
.ladder .last {
  background: #ffff00;
  color: #006400;
  font-weight: bold;
}
.ladder .best {
  color: #e60000;
  font-weight: bold;
}
.ladder .pnl {
  background: #000;
  color: #fff;
  font-weight: bold;
}
.actions {
  display: flex;
  gap: 5px;
  margin: 9px 0 0 23px;
}
.actions button {
  box-sizing: border-box;
  height: 23px;
  padding: 0;
  border: 1px solid #000;
  background: #faebd7;
  font: bold 12px Roboto, sans-serif;
}
.actions .small {
  width: 19px;
}
.trio {
  display: grid;
  grid-template-columns: 59px 1fr 59px;
  width: 213px;
}
.trio button + button {
  border-left: 0;
}
.rule {
  align-self: stretch;
  height: 1px;
  margin: 8px 7px 4px 5px;
  border: 0;
  border-bottom: 1px solid #dfe4e8;
  background: #9aa6b2;
}
.order {
  display: grid;
  grid-template-columns: 80px 72px 28px 52px 62px;
  grid-auto-rows: 20px;
  row-gap: 5px;
  align-items: center;
  padding-left: 3px;
}
.order label {
  white-space: nowrap;
  padding-top: 3px;
  color: #111820;
}
.order .second {
  grid-column: 4;
}
.order .faded {
  color: #4c5864;
  text-shadow: 1px 1px 0 #b8c2cc;
}
.order .full {
  grid-column: 2 / 6;
}
.combo {
  display: flex;
  align-items: center;
  box-sizing: border-box;
  height: 20px;
  padding: 1px;
  border: 1px solid #8199b8;
  background: #fff;
}
.combo select,
.combo input {
  flex: 1;
  min-width: 0;
  width: 100%;
  padding: 0 0 0 2px;
  border: 0;
  outline: 0;
  appearance: none;
  background: none;
  font: 11px Roboto, sans-serif;
  color: #000;
}
.combo input::-webkit-inner-spin-button {
  display: none;
}
.drop {
  flex: none;
  display: grid;
  place-items: center;
  width: 15px;
  height: 16px;
  background: linear-gradient(#dbe5fd, #b6c9f6);
  border-radius: 2px;
}
.drop path {
  fill: none;
  stroke: #41557c;
  stroke-width: 2;
}
.off {
  background: #ece9d8;
  border-color: #c6c2ae;
}
.combo.off select {
  color: #aca899;
  opacity: 1;
}
.off .drop {
  background: #e4e1d0;
}
.off path {
  stroke: #c4c0ac;
}
.params {
  flex: 1;
  box-sizing: border-box;
  margin: 2px 7px 1px 4px;
  padding: 0;
  border: 1px solid #b6bfc6;
  border-radius: 4px;
}
.params legend {
  margin-left: 6px;
  padding: 0 2px;
  color: #262e38;
}

/* charts */
.chart {
  background: #fff;
}
.intraday {
  grid-area: 1 / 4 / 3 / 5;
  margin-top: 1px;
  border-width: 0 4px 4px 2px;
}
.day {
  grid-area: 3 / 4 / 4 / 5;
  margin-left: 2px;
  border-width: 0 4px 2px 4px;
}
.chart :deep(.bar) {
  margin: 0;
  padding-left: 2px;
}
.chart :deep(.bar-title) {
  font-size: 14px;
}
.tools {
  display: flex;
  flex: none;
  align-items: center;
  box-sizing: border-box;
  height: 25px;
  border-bottom: 1px solid #a9a884;
  border-radius: 0 0 4px 0;
  background: linear-gradient(#fbfbf9, #ebe9dd 45%, #c6c4ac);
}
.grip {
  box-sizing: border-box;
  width: 2px;
  height: 16px;
  margin-left: 2px;
  border-left: 2px dotted #c4c2b4;
}
.sep {
  width: 1px;
  height: 18px;
  margin: 0 2px 0 6px;
  border-left: 1px solid #c8c6b6;
  background: #fff;
}
.pick,
.tool {
  display: flex;
  align-items: center;
  padding: 0;
  border: 0;
  background: none;
}
.pick {
  gap: 6px;
  margin-left: 4px;
  font: 11px Roboto, sans-serif;
  white-space: nowrap;
}
.pick + .pick {
  margin-left: 7px;
}
.tool.gap {
  margin-left: 6px;
}
.tool + .caret {
  margin-left: 2px;
}
.tool.toggle {
  box-sizing: border-box;
  width: 23px;
  height: 22px;
  justify-content: center;
  margin-right: 3px;
}
.tool.on {
  border: 1px solid #316ac5;
  background: #e1e6e8;
}
.tool.far {
  margin-left: 8px;
}
.caret {
  flex: none;
  width: 0;
  height: 0;
  border: 3px solid transparent;
  border-top-color: #000;
  border-bottom: 0;
}
.plot {
  position: relative;
}
.canvas {
  display: block;
  width: 100%;
  height: auto;
}
.grid path,
.axis path {
  fill: none;
  shape-rendering: crispEdges;
}
.grid {
  stroke: #ececdf;
}
.axis {
  stroke: #000;
}
.labels {
  font: 11px Roboto, sans-serif;
}
.menu {
  position: absolute;
  top: 1px;
  right: 1px;
  display: grid;
  place-items: center;
  box-sizing: border-box;
  width: 22px;
  height: 22px;
  padding: 0;
  border: 2px solid #2a5078;
  border-radius: 3px;
  background: #f2f0e4;
}
.menu .caret {
  border-width: 5px 5px 0;
}
.scroll {
  display: flex;
  flex: none;
  align-items: center;
  gap: 2px;
  box-sizing: border-box;
  height: 23px;
  padding: 0 1px 0 0;
  background: linear-gradient(#f0efec, #fdfdfb);
}
.step,
.thumb {
  display: grid;
  place-items: center;
  box-sizing: border-box;
  width: 15px;
  height: 21px;
  padding: 0;
  border: 1px solid #a8bff0;
  border-radius: 2px;
  background: linear-gradient(135deg, #d0defd, #b4c9f8);
}
.step path {
  fill: none;
  stroke: #41557c;
  stroke-width: 2;
}
.thumb {
  width: 26px;
  margin-left: auto;
}
.day .thumb {
  width: 126px;
}
.thumb::after {
  content: "";
  width: 7px;
  height: 7px;
  background: repeating-linear-gradient(90deg, #eef4fe 0 1px, #8ca8e4 1px 2px);
}

/* replay controller */
.player {
  position: absolute;
  left: 565px;
  top: 934px;
  box-sizing: border-box;
  width: 318px;
  height: 105px;
  border: 3px solid #0a45e0;
  border-top: 0;
  border-radius: 6px 6px 0 0;
  background: #ece9d8;
}
.player header {
  height: 28px;
  margin: 0 -3px;
  padding-left: 7px;
  border-radius: 6px 6px 0 0;
  background: linear-gradient(#0a4fd8 0, #2b86fa 8%, #0458ea 30%, #0560f4 75%, #0348d0 100%);
  font: bold 14px/28px "Noto Sans", sans-serif;
  white-space: nowrap;
  color: #fff;
}
.range {
  display: flex;
  align-items: center;
  height: 30px;
  padding-left: 12px;
}
.range label {
  width: 46px;
  padding-top: 2px;
}
.range .combo {
  width: 99px;
  margin-bottom: 4px;
}
.range .combo + label {
  width: 29px;
  padding-left: 16px;
}
.deck {
  display: flex;
  align-items: center;
  height: 40px;
  margin-left: 1px;
  padding-left: 4px;
  border-top: 1px solid #8a8678;
  border-left: 1px solid #8a8678;
}
.deck button {
  display: grid;
  place-items: center;
  box-sizing: border-box;
  width: 38px;
  height: 38px;
  padding: 0;
  border: 1px solid #123e6c;
  border-radius: 3px;
  background: #f2f0e6;
}
.deck .held {
  width: 36px;
  box-shadow: inset 0 0 0 2px #a4c0ee;
}
.deck button:nth-child(3) {
  margin-left: 3px;
}
.deck input {
  flex: 1;
  min-width: 0;
  height: 20px;
  margin: 0 10px 0 8px;
  appearance: none;
  background: linear-gradient(#b4b0a0, #b4b0a0) center / 100% 1px no-repeat, linear-gradient(#fff, #fff) center / 100% 3px no-repeat;
}
.deck input::-webkit-slider-thumb {
  appearance: none;
  width: 11px;
  height: 20px;
  clip-path: polygon(0 0, 100% 0, 100% 70%, 50% 100%, 0 70%);
  background: linear-gradient(#22a02c 0 4px, transparent 4px 15px, #5ea868 15px), linear-gradient(90deg, #6c8494 0 1px, #f4f6f2 1px 9px, #6c8494 9px 11px);
}

/* annotations */
.arrows {
  position: absolute;
  top: 0;
  left: 0;
  width: 100%;
  height: 100%;
  pointer-events: none;
  filter: drop-shadow(3px 4px 2px rgba(0, 0, 0, 0.4));
}
.note {
  position: absolute;
  left: 1034px;
  top: 233px;
  box-sizing: border-box;
  width: 272px;
  height: 79px;
  margin: 0;
  padding: 3px 0 0 4px;
  border: 3px solid #1580ec;
  background: #fff;
  box-shadow: 3px 4px 4px rgba(0, 0, 0, 0.5);
  font: bold 16px/19px "Liberation Sans", sans-serif;
  white-space: nowrap;
}
</style>
